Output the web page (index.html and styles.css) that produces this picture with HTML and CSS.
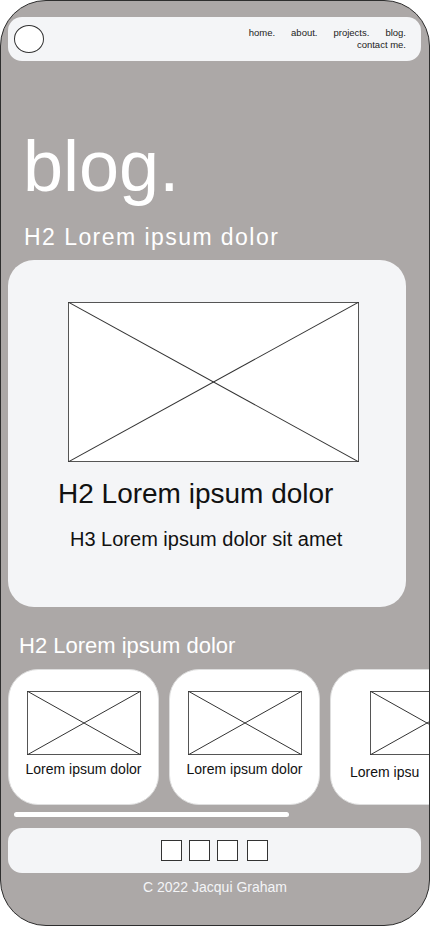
FILE: index.html
```html
<!DOCTYPE html>
<html lang="en">
	<head>
		<meta charset="UTF-8" />
		<meta name="viewport" content="width=device-width, initial-scale=1.0" />
		<title>blog.</title>
		<link rel="stylesheet" href="styles.css">
	</head>
	<body>
		<div class="phone">

			<!-- Nav: Begin -->
			<nav class="nav">
				<span class="logo"></span>
				<div class="links">
					<a href="#">home.</a>
					<a href="#">about.</a>
					<a href="#">projects.</a>
					<a href="#">blog.</a>
					<a href="#">contact me.</a>
				</div>
			</nav>
			<!-- Nav: End -->

			<h1 class="page-title">blog.</h1>
			<h2 class="section-title wide">H2 Lorem ipsum dolor</h2>

			<!-- Featured post: Begin -->
			<div class="feature">
				<svg class="ph ph-big" viewBox="0 0 100 100" preserveAspectRatio="none">
					<rect x="0" y="0" width="100" height="100" />
					<line x1="0" y1="0" x2="100" y2="100" />
					<line x1="100" y1="0" x2="0" y2="100" />
				</svg>
				<h2 class="feature-title">H2 Lorem ipsum dolor</h2>
				<h3 class="feature-sub">H3 Lorem ipsum dolor sit amet</h3>
			</div>
			<!-- Featured post: End -->

			<h2 class="section-title small">H2 Lorem ipsum dolor</h2>

			<!-- Post row: Begin -->
			<div class="row">
				<div class="tile">
					<svg class="ph ph-small" viewBox="0 0 100 100" preserveAspectRatio="none">
						<rect x="0" y="0" width="100" height="100" />
						<line x1="0" y1="0" x2="100" y2="100" />
						<line x1="100" y1="0" x2="0" y2="100" />
					</svg>
					<p class="tile-text">Lorem ipsum dolor</p>
				</div>
				<div class="tile">
					<svg class="ph ph-small" viewBox="0 0 100 100" preserveAspectRatio="none">
						<rect x="0" y="0" width="100" height="100" />
						<line x1="0" y1="0" x2="100" y2="100" />
						<line x1="100" y1="0" x2="0" y2="100" />
					</svg>
					<p class="tile-text">Lorem ipsum dolor</p>
				</div>
				<div class="tile tile-cut">
					<svg class="ph ph-small" viewBox="0 0 100 100" preserveAspectRatio="none">
						<rect x="0" y="0" width="100" height="100" />
						<line x1="0" y1="0" x2="100" y2="100" />
						<line x1="100" y1="0" x2="0" y2="100" />
					</svg>
					<p class="tile-text">Lorem ipsu</p>
				</div>
			</div>
			<div class="scrollbar"></div>
			<!-- Post row: End -->

			<!-- Footer: Begin -->
			<footer class="footer">
				<span class="social"></span>
				<span class="social"></span>
				<span class="social"></span>
				<span class="social last"></span>
			</footer>
			<p class="copy">C 2022 Jacqui Graham</p>
			<!-- Footer: End -->

		</div>
	</body>
</html>
```

FILE: styles.css
```css
body {
	margin: 0;
	background-color: #ffffff;
	font-family: "Liberation Sans", Arial, sans-serif;
}

.phone {
	box-sizing: border-box;
	width: 430px;
	height: 926px;
	border: 1px solid #2e2e2e;
	border-radius: 46px;
	background-color: #aca8a7;
	overflow: hidden;
	padding-top: 16px;
}

/* nav */
.nav {
	box-sizing: border-box;
	height: 44px;
	margin: 0 8px 0 7px;
	padding: 0 15px 0 6px;
	border-radius: 14px;
	background-color: #f4f5f7;
	display: flex;
	align-items: center;
	justify-content: space-between;
}

.logo {
	box-sizing: border-box;
	width: 30px;
	height: 28px;
	border: 1px solid #333;
	border-radius: 50%;
	background-color: #ffffff;
}

.links {
	width: 165px;
	display: flex;
	flex-wrap: wrap;
	justify-content: flex-end;
	column-gap: 16px;
	font-size: 9.5px;
	line-height: 12.5px;
}

.links a {
	color: #222;
	text-decoration: none;
}

/* headings */
.page-title {
	margin: 69px 0 0 22px;
	font-size: 72px;
	line-height: 72px;
	font-weight: normal;
	color: #ffffff;
}

.section-title {
	font-weight: normal;
	color: #ffffff;
}

.section-title.wide {
	margin: 21px 0 0 23px;
	font-size: 23px;
	line-height: 28px;
	letter-spacing: 1.45px;
}

.section-title.small {
	margin: 26px 0 0 18px;
	font-size: 22px;
	line-height: 26px;
}

/* featured card */
.feature {
	box-sizing: border-box;
	width: 398px;
	height: 347px;
	margin: 9px 0 0 7px;
	padding: 42px 0 0 0;
	border-radius: 26px;
	background-color: #f4f5f7;
	color: #111;
}

.ph {
	display: block;
	background-color: #ffffff;
}

.ph rect {
	fill: #ffffff;
	stroke: #555;
	stroke-width: 2px;
	vector-effect: non-scaling-stroke;
}

.ph line {
	stroke: #333;
	stroke-width: 1px;
	vector-effect: non-scaling-stroke;
}

.ph-big {
	width: 291px;
	height: 160px;
	margin-left: 60px;
}

.feature-title {
	margin: 16px 0 0 50px;
	font-size: 28px;
	line-height: 32px;
	font-weight: normal;
}

.feature-sub {
	margin: 17px 0 0 62px;
	font-size: 20px;
	line-height: 24px;
	font-weight: normal;
}

/* small posts */
.row {
	display: flex;
	gap: 10px;
	margin: 10px 0 0 7px;
}

.tile {
	box-sizing: border-box;
	flex: 0 0 151px;
	height: 136px;
	padding-top: 21px;
	border: 1px solid #dedede;
	border-radius: 30px;
	background-color: #ffffff;
	display: flex;
	flex-direction: column;
	align-items: center;
}

.ph-small {
	flex: 0 0 auto;
	width: 114px;
	height: 64px;
}

.tile-text {
	margin: 6px 0 0 0;
	font-size: 14px;
	line-height: 17px;
	color: #111;
	white-space: nowrap;
}

.tile-cut {
	align-items: flex-start;
	padding-left: 19px;
}

.tile-cut .ph-small {
	margin-left: 20px;
}

.tile-cut .tile-text {
	margin-top: 9px;
}

.scrollbar {
	width: 275px;
	height: 5px;
	margin: 7px 0 0 13px;
	border-radius: 3px;
	background-color: #ffffff;
}

/* footer */
.footer {
	box-sizing: border-box;
	height: 45px;
	margin: 11px 8px 0 7px;
	border-radius: 14px;
	background-color: #f4f5f7;
	display: flex;
	align-items: center;
	justify-content: center;
	gap: 7px;
}

.social {
	box-sizing: border-box;
	width: 21px;
	height: 21px;
	border: 1.5px solid #333;
	background-color: #ffffff;
}

.social.last {
	margin-left: 2px;
}

.copy {
	margin: 6px 0 0 0;
	font-size: 14px;
	line-height: 17px;
	text-align: center;
	color: #f4f5f7;
}
```
